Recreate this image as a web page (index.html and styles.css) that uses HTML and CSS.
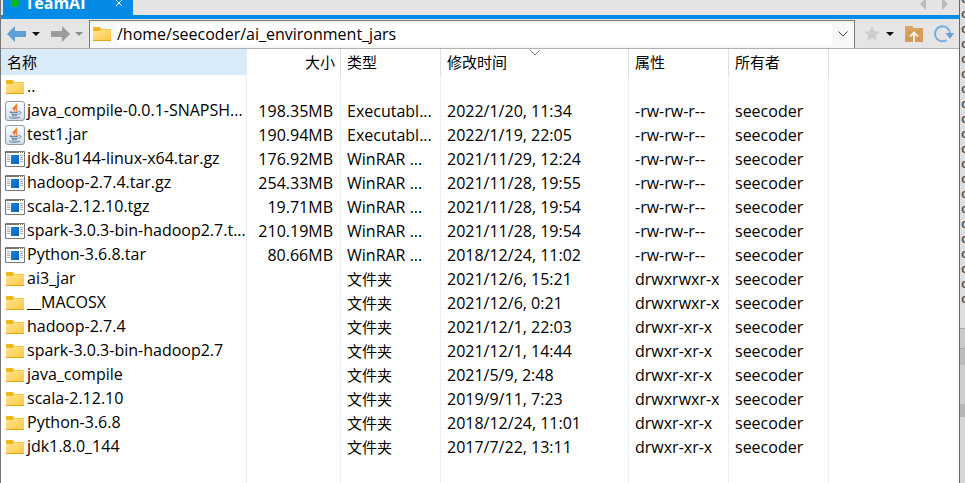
FILE: index.html
```html
<!DOCTYPE html>
<html lang="zh-CN">
<head>
<meta charset="utf-8">
<title>TeamAI</title>
<link rel="stylesheet" href="styles.css">
</head>
<body>
<svg class="sprite" aria-hidden="true">
  <defs>
    <linearGradient id="folder-fill" x1="0" y1="0" x2="1" y2="1"><stop offset="0" stop-color="#ffe59a"/><stop offset="1" stop-color="#ffc83a"/></linearGradient>
    <linearGradient id="jar-fill" x1="0" y1="0" x2="0" y2="1"><stop offset="0" stop-color="#fdfdfe"/><stop offset="1" stop-color="#d3dce5"/></linearGradient>
    <linearGradient id="app-fill" x1="0" y1="0" x2="1" y2="1"><stop offset="0" stop-color="#1688df"/><stop offset="1" stop-color="#005fb4"/></linearGradient>
  </defs>
  <symbol id="folder" viewBox="0 0 20 20">
    <path d="M1 3.500Q1 3 1.600 3H7.500L9.500 5H18.500Q19 5 19 5.600V9H1Z" fill="#f4b51f"/>
    <path d="M1 7H7.500L9.500 5.500H19V16.500H1Z" fill="url(#folder-fill)"/>
    <path d="M1 16H19V17H1Z" fill="#e5a51c"/>
  </symbol>
  <symbol id="jar" viewBox="0 0 20 20">
    <rect x=".5" y=".5" width="19" height="19" rx="2.500" fill="url(#jar-fill)" stroke="#8e9ba7"/>
    <path d="M11 2.500C12 5 7 6 8 8.200Q8.500 9.500 9.600 10.500C8.800 8.500 9.500 8 10.800 7C12.500 5.500 12 4 11 2.500ZM12.500 6C10.500 7 10 8 11 9C11.500 9.800 11 10.300 10.500 11C13 9.500 12 8.500 11.500 8Q11.500 7 12.500 6Z" fill="#e8742c" stroke="#e8742c" stroke-width=".5"/>
    <path d="M6.500 10.500Q3.500 11.300 6 11.700Q9.500 12 13 11.200M13.500 10.500C17 10.500 15.500 13 13.500 13.400M6.500 13Q9.500 14 12.500 13M7 14.700Q9.500 15.600 12 14.600M5 15.500C3 17.300 11 17.800 15 16.200" fill="none" stroke="#527893"/>
  </symbol>
  <symbol id="archive" viewBox="0 0 20 20">
    <path d="M.5 2.500H19.500V17.500H.5Z" fill="#fff" stroke="#777"/>
    <path d="M1 3.500H14M15 3.500H16M17 3.500H18" stroke="#777"/>
    <path d="M2 6.500H5M2 8.500H5M2 10.500H5M2 12.500H5M15 6.500H18M15 8.500H18M15 10.500H18M15 12.500H18" stroke="#aaa"/>
    <path d="M6 6H14V15H6Z" fill="url(#app-fill)"/>
  </symbol>
</svg>
<div class="app">
  <main class="pane">
    <nav class="tabs">
      <button class="tab" type="button"><span class="dot"></span><span class="tab-name">TeamAI</span>
        <svg class="close" viewBox="0 0 8 8"><path d="M1 1L7 7M7 1L1 7" stroke="#fff"/></svg></button>
      <button class="scroll" type="button" aria-label="向左"><svg viewBox="0 0 8 12"><path d="M7 0V12L1 6Z" fill="#bababa"/></svg></button>
      <button class="scroll" type="button" aria-label="向右"><svg viewBox="0 0 8 12"><path d="M1 0V12L7 6Z" fill="#bababa"/></svg></button>
    </nav>
    <div class="toolbar">
      <button class="tool" type="button" aria-label="后退"><svg class="arrow" viewBox="0 0 20 16"><path d="M0 8L8 0V5H19V11H8V16Z" fill="#5f9fd7"/></svg></button>
      <button class="drop" type="button" aria-label="后退历史"><svg viewBox="0 0 8 4"><path d="M0 0H8L4 4Z" fill="#111"/></svg></button>
      <button class="tool next" type="button" aria-label="前进"><svg class="arrow" viewBox="0 0 20 16"><path d="M20 8L12 0V5H1V11H12V16Z" fill="#9c9c9c"/></svg></button>
      <button class="drop" type="button" aria-label="前进历史"><svg viewBox="0 0 8 4"><path d="M0 0H8L4 4Z" fill="#8c8c8c"/></svg></button>
      <div class="address">
        <svg class="icon"><use href="#folder"/></svg>
        <input type="text" aria-label="路径" value="/home/seecoder/ai_environment_jars">
        <button class="open" type="button" aria-label="展开路径"><svg viewBox="0 0 10 6"><path d="M.5 .5L5 5L9.500 .5" fill="none" stroke="#444"/></svg></button>
      </div>
      <button class="tool star" type="button" aria-label="收藏"><svg viewBox="0 0 18 18"><path d="M9 1L11.300 6.300L17 6.700L12.700 10.500L14 16L9 13.100L4 16L5.300 10.500L1 6.700L6.700 6.300Z" fill="#cdcdcd"/></svg></button>
      <button class="drop" type="button" aria-label="收藏列表"><svg viewBox="0 0 8 4"><path d="M0 0H8L4 4Z" fill="#111"/></svg></button>
      <button class="tool up" type="button" aria-label="上级文件夹"><svg viewBox="0 0 18 18"><path d="M0 1H7L9 3H18V17H0Z" fill="#dca564"/><path d="M3 5H18V17H0V12Z" fill="#d49c58"/><path d="M9 17V8M5 11.500L9 7.500L13 11.500" fill="none" stroke="#f5eee6" stroke-width="2"/></svg></button>
      <button class="tool refresh" type="button" aria-label="刷新"><svg viewBox="0 0 20 18"><path d="M12.500 15.200A7.500 7.500 0 1 1 16 8" fill="none" stroke="#78afe0" stroke-width="2"/><path d="M11.500 8H20L16 14Z" fill="#65a2da"/></svg></button>
    </div>
    <div class="list">
      <table>
        <colgroup><col class="c-name"><col class="c-size"><col class="c-type"><col class="c-time"><col class="c-mode"><col class="c-owner"><col></colgroup>
        <thead><tr><th class="sorted">名称</th><th class="size">大小</th><th>类型</th><th class="time">修改时间<svg class="sort" viewBox="0 0 10 6"><path d="M.5 .5L5 5L9.500 .5" fill="none" stroke="#777"/></svg></th><th>属性</th><th>所有者</th><th></th></tr></thead>
        <tbody>
          <tr><td><svg class="icon"><use href="#folder"/></svg>..</td><td class="size"></td><td></td><td></td><td></td><td></td><td></td></tr>
          <tr><td><svg class="icon"><use href="#jar"/></svg>java_compile-0.0.1-SNAPSH...</td><td class="size">198.35MB</td><td>Executabl...</td><td>2022/1/20, 11:34</td><td>-rw-rw-r--</td><td>seecoder</td><td></td></tr>
          <tr><td><svg class="icon"><use href="#jar"/></svg>test1.jar</td><td class="size">190.94MB</td><td>Executabl...</td><td>2022/1/19, 22:05</td><td>-rw-rw-r--</td><td>seecoder</td><td></td></tr>
          <tr><td><svg class="icon"><use href="#archive"/></svg>jdk-8u144-linux-x64.tar.gz</td><td class="size">176.92MB</td><td>WinRAR ...</td><td>2021/11/29, 12:24</td><td>-rw-rw-r--</td><td>seecoder</td><td></td></tr>
          <tr><td><svg class="icon"><use href="#archive"/></svg>hadoop-2.7.4.tar.gz</td><td class="size">254.33MB</td><td>WinRAR ...</td><td>2021/11/28, 19:55</td><td>-rw-rw-r--</td><td>seecoder</td><td></td></tr>
          <tr><td><svg class="icon"><use href="#archive"/></svg>scala-2.12.10.tgz</td><td class="size">19.71MB</td><td>WinRAR ...</td><td>2021/11/28, 19:54</td><td>-rw-rw-r--</td><td>seecoder</td><td></td></tr>
          <tr><td><svg class="icon"><use href="#archive"/></svg>spark-3.0.3-bin-hadoop2.7.t...</td><td class="size">210.19MB</td><td>WinRAR ...</td><td>2021/11/28, 19:54</td><td>-rw-rw-r--</td><td>seecoder</td><td></td></tr>
          <tr><td><svg class="icon"><use href="#archive"/></svg>Python-3.6.8.tar</td><td class="size">80.66MB</td><td>WinRAR ...</td><td>2018/12/24, 11:02</td><td>-rw-rw-r--</td><td>seecoder</td><td></td></tr>
          <tr><td><svg class="icon"><use href="#folder"/></svg>ai3_jar</td><td class="size"></td><td class="cjk">文件夹</td><td>2021/12/6, 15:21</td><td>drwxrwxr-x</td><td>seecoder</td><td></td></tr>
          <tr><td><svg class="icon"><use href="#folder"/></svg>__MACOSX</td><td class="size"></td><td class="cjk">文件夹</td><td>2021/12/6, 0:21</td><td>drwxrwxr-x</td><td>seecoder</td><td></td></tr>
          <tr><td><svg class="icon"><use href="#folder"/></svg>hadoop-2.7.4</td><td class="size"></td><td class="cjk">文件夹</td><td>2021/12/1, 22:03</td><td>drwxr-xr-x</td><td>seecoder</td><td></td></tr>
          <tr><td><svg class="icon"><use href="#folder"/></svg>spark-3.0.3-bin-hadoop2.7</td><td class="size"></td><td class="cjk">文件夹</td><td>2021/12/1, 14:44</td><td>drwxr-xr-x</td><td>seecoder</td><td></td></tr>
          <tr><td><svg class="icon"><use href="#folder"/></svg>java_compile</td><td class="size"></td><td class="cjk">文件夹</td><td>2021/5/9, 2:48</td><td>drwxr-xr-x</td><td>seecoder</td><td></td></tr>
          <tr><td><svg class="icon"><use href="#folder"/></svg>scala-2.12.10</td><td class="size"></td><td class="cjk">文件夹</td><td>2019/9/11, 7:23</td><td>drwxrwxr-x</td><td>seecoder</td><td></td></tr>
          <tr><td><svg class="icon"><use href="#folder"/></svg>Python-3.6.8</td><td class="size"></td><td class="cjk">文件夹</td><td>2018/12/24, 11:01</td><td>drwxr-xr-x</td><td>seecoder</td><td></td></tr>
          <tr><td><svg class="icon"><use href="#folder"/></svg>jdk1.8.0_144</td><td class="size"></td><td class="cjk">文件夹</td><td>2017/7/22, 13:11</td><td>drwxr-xr-x</td><td>seecoder</td><td></td></tr>
          <tr class="filler"><td></td><td></td><td></td><td></td><td></td><td></td><td></td></tr>
        </tbody>
      </table>
    </div>
  </main>
  <aside class="behind">
    <div class="log">c<br>c<br>c<br>c<br>c<br>c<br>c<br>c<br>c<br>c<br>c<br>c<br>c<br>c<br>c<br>c<br>c<br>c<br>c<br>c<br>c</div>
    <div class="band"></div><div class="band mid"></div><div class="band light"></div><div class="band dark"></div><div class="rest"></div>
  </aside>
</div>
</body>
</html>
```
FILE: styles.css
```css
* { box-sizing: border-box; }
body {
  margin: 0;
  font: 16px/22px "Open Sans", "Noto Sans CJK SC", sans-serif;
  color: #000;
}
button { padding: 0; border: 0; background: none; font: inherit; }
svg { display: block; }
.sprite { position: absolute; width: 0; height: 0; }
.app { display: flex; height: 100vh; overflow: hidden; }
.pane {
  flex: 1;
  min-width: 0;
  display: flex;
  flex-direction: column;
  border-left: 1px solid #777;
  border-right: 1px solid #666;
}

.tabs {
  flex: none;
  display: flex;
  align-items: flex-end;
  height: 19px;
  padding: 0 10px 0 2px;
  overflow: hidden;
  background: #e4e4e4;
  border-bottom: 4px solid #038be5;
}
.tab {
  display: flex;
  align-items: center;
  width: 130px;
  height: 24px;
  margin-right: auto;
  padding: 0 10px 0 8px;
  background: #038be5;
  color: #fff;
  font-weight: 700;
}
.dot { width: 8px; height: 8px; margin-right: 6px; border-radius: 50%; background: #06bd12; }
.close { width: 8px; height: 8px; margin-left: auto; }
.scroll { width: 8px; height: 22px; margin-left: 14px; }
.scroll svg { width: 8px; height: 12px; }

.toolbar {
  flex: none;
  display: flex;
  align-items: center;
  height: 30px;
  padding: 0 5px 0 6px;
  background: #e5e5e5;
  border-bottom: 1px solid #b0b0b0;
}
.arrow { width: 20px; height: 16px; }
.drop { margin-left: 5px; }
.drop svg { width: 8px; height: 4px; }
.next { margin-left: 10px; }
.address {
  flex: 1;
  display: flex;
  align-items: center;
  align-self: stretch;
  min-width: 0;
  margin: 1px 8px 0 6px;
  padding: 0 0 2px 2px;
  border: 1px solid #7a7a7a;
  border-bottom: 0;
  background: #f8f8f8;
}
.address input {
  flex: 1;
  min-width: 0;
  height: 22px;
  margin-left: 5px;
  padding: 0;
  border: 0;
  background: #fff;
  font: inherit;
  color: inherit;
}
.open { width: 22px; }
.open svg { width: 10px; height: 6px; margin: 0 auto; }
.star svg, .up svg { width: 18px; height: 18px; }
.up { margin-left: 11px; }
.refresh { margin-left: 11px; }
.refresh svg { width: 20px; height: 18px; }

.list { flex: 1; min-height: 0; overflow: hidden; background: #fff; }
table { width: 100%; height: 100%; table-layout: fixed; border-collapse: separate; border-spacing: 0; }
.c-name { width: 246px; }
.c-size { width: 94px; }
.c-type, .c-mode, .c-owner { width: 100px; }
.c-time { width: 188px; }
th, td {
  height: 24px;
  padding: 0 0 0 6px;
  border-right: 1px solid #e6f0fb;
  text-align: left;
  font-weight: 400;
  white-space: nowrap;
  overflow: hidden;
}
td:first-child { padding-left: 4px; }
th { height: 26px; border-color: #e0e0e0; }
th, .cjk { font-size: 15px; }
th:last-child, td:last-child { border-right: 0; }
th.sorted { background: #d9eaf8; border-color: #d9eaf8; }
.size { padding: 0 7px 0 0; text-align: right; }
th.size { padding-right: 5px; }
.time { position: relative; }
.sort { position: absolute; top: 1px; left: 50%; width: 10px; height: 6px; margin-left: -5px; }
.icon { flex: none; width: 20px; height: 20px; }
td .icon { display: inline-block; margin: 0 2px 2px 0; vertical-align: middle; }
.filler td { height: auto; }

.behind { flex: none; width: 5px; display: flex; flex-direction: column; overflow: hidden; background: #dedede; }
.log {
  height: 329px;
  margin-top: -7px;
  padding-left: 1px;
  flex: none;
  font: 700 12px/15px "Liberation Mono", monospace;
  color: #555;
}
.band { flex: none; height: 20px; margin-top: 6px; background: #c9c9c9; border-top: 1px solid #aaa; }
.band.mid { height: 17px; margin: 0; background: #bcbcbf; }
.band.light { height: 39px; margin: 0; border: 0; background: #cdcdcd; }
.band.dark { height: 13px; margin: 0; border: 0; background: #b5b5b5; }
.rest { flex: 1; background: #d5d5d5; }
```
